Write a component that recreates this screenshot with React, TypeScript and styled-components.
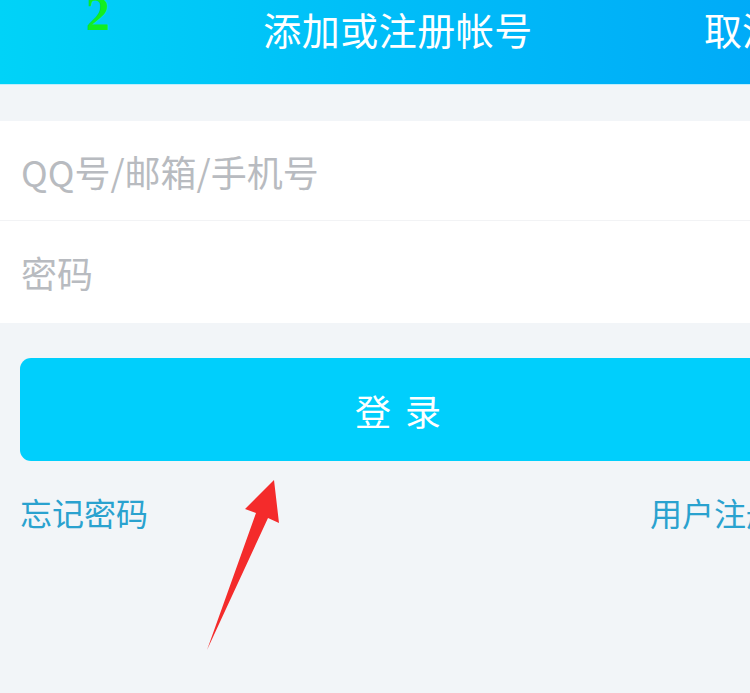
import React from 'react';
import styled, { createGlobalStyle } from 'styled-components';

const GlobalStyle = createGlobalStyle`
  html, body {
    margin: 0;
    padding: 0;
    background: #f2f5f8;
    overflow: hidden;
  }
  body {
    font-family: "Noto Sans CJK SC", "Noto Sans", sans-serif;
  }
`;

const Screen = styled.div`
  position: relative;
  width: 796px;
  height: 693px;
  background: #f2f5f8;
  overflow: hidden;
`;

const Header = styled.header`
  height: 85px;
  box-sizing: border-box;
  display: flex;
  align-items: flex-start;
  justify-content: center;
  padding-top: 6px;
  background: linear-gradient(90deg, #00d3f8 0%, #00bff8 45%, #00a9f8 100%);
  border-bottom: 1px solid #bfeefc;
  position: relative;
`;

const Title = styled.h1`
  margin: 0;
  font-size: 38px;
  font-weight: 400;
  line-height: 46px;
  color: #ffffff;
  letter-spacing: 0.5px;
`;

const Cancel = styled.span`
  position: absolute;
  right: 16px;
  top: 6px;
  font-size: 38px;
  line-height: 46px;
  color: #ffffff;
`;

const StepMark = styled.span`
  position: absolute;
  left: 86px;
  top: -10px;
  font-family: "Liberation Serif", serif;
  font-size: 48px;
  font-weight: 700;
  line-height: 48px;
  color: #12ee22;
`;

const Card = styled.section`
  margin-top: 36px;
  background: #ffffff;
  display: flex;
  flex-direction: column;
`;

const Field = styled.div<{ $h: number; $last?: boolean }>`
  height: ${(p) => p.$h}px;
  display: flex;
  align-items: center;
  padding-left: 21px;
  border-bottom: ${(p) => (p.$last ? 'none' : '1px solid #f2f3f5')};
  font-size: 36px;
  color: #b8bbc0;
`;

const LoginButton = styled.button`
  display: block;
  margin: 35px 20px 0;
  width: calc(100% - 40px);
  height: 103px;
  border: none;
  border-radius: 11px;
  background: #00cffc;
  color: #ffffff;
  font-family: inherit;
  font-size: 36px;
  letter-spacing: 14px;
  text-indent: 14px;
  padding: 0;
`;

const Links = styled.div`
  display: flex;
  justify-content: space-between;
  padding: 30px 18px 0 20px;
`;

const LinkText = styled.span`
  font-size: 32px;
  line-height: 42px;
  color: #2aa2cf;
`;

const Arrow = styled.svg`
  position: absolute;
  left: 0;
  top: 0;
  width: 796px;
  height: 693px;
  pointer-events: none;
`;

const App: React.FC = () => (
  <>
    <GlobalStyle />
    <Screen>
      <Header>
        <StepMark>2</StepMark>
        <Title>添加或注册帐号</Title>
        <Cancel>取消</Cancel>
      </Header>
      <Card>
        <Field $h={99}>QQ号/邮箱/手机号</Field>
        <Field $h={102} $last>
          密码
        </Field>
      </Card>
      <LoginButton>登录</LoginButton>
      <Links>
        <LinkText>忘记密码</LinkText>
        <LinkText>用户注册</LinkText>
      </Links>
      <Arrow viewBox="0 0 796 693">
        <polygon
          points="274,480 279,523 268,518 207,650 256,513 245,509"
          fill="#f42b2b"
        />
      </Arrow>
    </Screen>
  </>
);

export default App;
